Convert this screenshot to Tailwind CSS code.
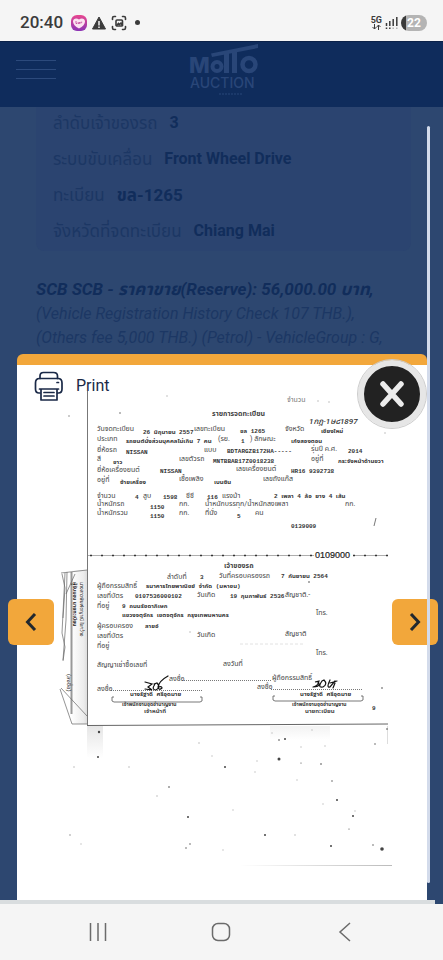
<!DOCTYPE html>
<html lang="th">
<head>
  <meta charset="UTF-8">
  <meta name="viewport" content="width=device-width, initial-scale=1.0">
  <title>Motto Auction</title>
  <script src="https://cdn.jsdelivr.net/npm/@tailwindcss/browser@4"></script>
</head>
<body class="min-h-screen flex flex-col bg-[#f5f5f5] font-[Roboto,'Noto_Sans_Thai','Noto_Sans',sans-serif]">
  <!-- Status bar -->
  <div class="h-[41px] shrink-0 flex items-center justify-between pl-5 pr-4 pt-1 text-[#3b3b3b]">
    <div class="flex items-center gap-1">
      <span class="text-[17px] font-medium mr-1">20:40</span>
      <svg class="size-4" viewBox="0 0 16 16">
        <defs><linearGradient id="app" x1="0" y1="0" x2="0" y2="1"><stop offset="0" stop-color="#e8478f"/><stop offset="1" stop-color="#8b35b5"/></linearGradient></defs>
        <rect width="16" height="16" rx="6" fill="url(#app)"/>
        <path d="M8 13.500C4 11.500 2 9 2 6.500 2 3.500 5.500 2.500 8 4.500c2.500-2 6-1 6 2 0 2.500-2 5-6 7z" fill="#fbe3f1"/>
        <path d="M5 6v2.500h1.200M7.200 7v1.500h1.300V7M9.800 8.500V7.200h1.400" fill="none" stroke="#c23c97" stroke-width=".8"/>
      </svg>
      <svg class="size-4" viewBox="0 0 16 16"><path d="M8 2l6.500 12h-13z" fill="#3b3b3b" stroke="#3b3b3b" stroke-linejoin="round"/><path d="M8 6v4.500M8 11.500v1.500" stroke="#f5f5f5" stroke-width="1.500"/></svg>
      <svg class="size-4" viewBox="0 0 16 16" fill="none" stroke="#3b3b3b" stroke-width="1.600" stroke-linecap="round">
        <path d="M1.500 4.500V3q0-1.500 1.500-1.500h1.500M11.500 1.500H13q1.500 0 1.500 1.500v1.500M14.500 11.500V13q0 1.500-1.500 1.500h-1.500M4.500 14.500H3q-1.500 0-1.500-1.500v-1.500"/>
        <rect x="5" y="5" width="6.500" height="6" rx="1"/><path d="M5.500 10.500l2-2 1 1 1.500-1.500 1.500 2.500"/>
      </svg>
      <span class="size-[5px] rounded-full bg-[#3b3b3b] ml-1"></span>
    </div>
    <div class="flex items-center gap-[3px]">
      <div class="flex flex-col items-center">
        <span class="text-[9px] leading-[8px] font-bold">5G</span>
        <svg class="w-[9px] h-[6px]" viewBox="0 0 9 6" fill="none" stroke="#3b3b3b"><path d="M2.500 0v5M.500 3l2 2 2-2M6.500 6V1M4.800 3l1.700-2 2 2"/></svg>
      </div>
      <svg class="w-[13px] h-[14px]" viewBox="0 0 13 14" stroke="#3b3b3b" stroke-width="1.500"><path d="M1.500 7v3M4.800 5v5M8.200 3v7M11.800 1v9"/><path d="M1.500 11.500V13M4.800 11.500V13" /><path d="M8.200 11.500V13M11.800 11.500V13" stroke="#b5b5b5"/></svg>
      <span class="w-[26px] h-4 rounded-full text-center text-[12px] leading-4 font-bold text-white bg-linear-to-r from-[#3b3b3b] from-20% to-[#b4b4b4] to-20%">22</span>
    </div>
  </div>

  <main class="relative flex-1 bg-[#2d4770] overflow-hidden">
    <!-- Site header, dimmed by the overlay -->
    <header class="h-[66px] bg-[#0f2c5c] border-t border-[#0b2148] flex items-start justify-between px-4">
      <button aria-label="Menu" class="w-10 mt-[18px] flex flex-col gap-2">
        <span class="h-px w-full bg-[#2c4a7c]"></span>
        <span class="h-px w-full bg-[#2c4a7c]"></span>
        <span class="h-px w-full bg-[#2c4a7c]"></span>
      </button>
      <svg class="w-[72px] h-[56px]" viewBox="0 0 72 56" fill="#294678" font-family="Inter, sans-serif" font-weight="800">
        <text x="3" y="31" font-size="22">M</text>
        <circle cx="31" cy="24.500" r="4.500" fill="none" stroke="#294678" stroke-width="4"/>
        <path d="M25 11.500L72 2v4L26 15zM38 11.500l5-1V31h-5zM46 10l5-1v22h-5z"/>
        <circle cx="63" cy="22.500" r="6.500" fill="none" stroke="#294678" stroke-width="4.500"/>
        <text x="4" y="46" font-size="14" font-weight="500">AUCTION</text>
        <path d="M33 52h24" stroke="#294678" stroke-width="1" stroke-dasharray="2 1"/>
      </svg>
      <span class="w-10"></span>
    </header>

    <!-- Vehicle details -->
    <section class="h-[247px] overflow-hidden px-9 text-[#1c3764]">
      <div class="w-[118px] h-1 mx-auto bg-[#343f58] rounded-b"></div>
      <dl class="h-[146px] -mr-1 px-[17px] bg-[#2b4470] rounded-b-lg leading-9">
        <div class="flex gap-3 -mt-1.5 h-9"><dt class="text-[17px]">ลำดับเจ้าของรถ</dt><dd class="font-bold text-[#112d5b]">3</dd></div>
        <div class="flex gap-3 h-9"><dt class="text-[17px]">ระบบขับเคลื่อน</dt><dd class="font-bold text-[#112d5b]">Front Wheel Drive</dd></div>
        <div class="flex gap-3 h-9"><dt class="text-[17px]">ทะเบียน</dt><dd class="text-[17px] font-bold text-[#112d5b]">ขล-1265</dd></div>
        <div class="flex gap-3 h-9"><dt class="text-[17px]">จังหวัดที่จดทะเบียน</dt><dd class="font-bold text-[#112d5b]">Chiang Mai</dd></div>
      </dl>
      <p class="mt-[26px] text-base leading-6 italic whitespace-nowrap">
        <b class="text-[17px] text-[#112d5b]">SCB SCB - ราคาขาย(Reserve): 56,000.00 บาท,</b><br>
        <span>(Vehicle Registration History Check 107 THB.),<br>(Others fee 5,000 THB.) (Petrol) - VehicleGroup : G,</span>
      </p>
    </section>

    <!-- Document popup -->
    <section class="relative ml-[17px] mr-4 border-t-[11px] border-[#f2a73b] rounded-t-md bg-white">
      <svg class="block w-full" viewBox="17 365 410 535" role="img" aria-label="รายการจดทะเบียน" font-family="Roboto, 'Noto Sans Thai', 'Noto Sans', sans-serif" font-size="7" fill="#444">
        <defs>
          <linearGradient id="fold" x1="0" x2="1"><stop offset="0" stop-color="#fff"/><stop offset=".8" stop-color="#ececec"/><stop offset="1" stop-color="#ddd"/></linearGradient>
          <linearGradient id="edge" gradientUnits="userSpaceOnUse" x1="240" x2="392" y1="0" y2="0"><stop offset="0" stop-color="#fff"/><stop offset="1" stop-color="#bbb"/></linearGradient>
          <linearGradient id="shade" x1="0" x2="0" y1="0" y2="1"><stop offset="0" stop-color="#e6e6e6"/><stop offset="1" stop-color="#fff"/></linearGradient>
        </defs>

        <!-- paper edges and folded flap -->
        <rect x="71" y="570" width="16" height="154" fill="url(#fold)"/>
        <rect x="87" y="726" width="16" height="32" fill="url(#shade)"/>
        <rect x="270" y="726" width="60" height="14" fill="url(#shade)" opacity=".5"/>
        <path d="M87.500 391V725" stroke="#777"/>
        <path d="M87 725.500L388 724" stroke="#666"/>
        <path d="M387.500 726v18" stroke="#ddd"/>
        <path d="M240 865.500h152" stroke="url(#edge)"/>
        <path d="M71.500 572v142" stroke="#999" stroke-width="2"/>
        <g fill="none" stroke="#666" stroke-width=".7">
          <path d="M61 573l26-3M65 573l-3 60 3 14-2 14M62 574l3 14-2 30M67 572l-1 48-3 40M60 689l12 35h15M61 688l26 28M75 574l-9 20"/>
        </g>
        <g font-size="5" fill="#222">
          <text transform="translate(80 582) rotate(90)">นางสาวพิมพ์ชญาณี ใจกว้าง</text>
          <text transform="translate(73 582) rotate(90)" font-weight="bold">ผู้รับมอบ นายทะเบียน</text>
          <text transform="translate(67 674) rotate(90)" font-size="6">(ลงชื่อ)</text>
        </g>

        <!-- printed form -->
        <g font-weight="bold"><text x="212" y="416">รายการจดทะเบียน</text><text x="224" y="568">เจ้าของรถ</text></g>
        <text x="97" y="431">วันจดทะเบียน</text><text x="194" y="431">เลขทะเบียน</text><text x="285" y="431">จังหวัด</text>
        <text x="97" y="441">ประเภท</text><text x="218" y="441">(รย.</text><text x="250" y="441">) ลักษณะ</text>
        <text x="97" y="452">ยี่ห้อรถ</text><text x="204" y="452">แบบ</text><text x="311" y="451">รุ่นปี ค.ศ.</text>
        <text x="97" y="461">สี</text><text x="179" y="461">เลขตัวรถ</text><text x="311" y="461">อยู่ที่</text>
        <text x="97" y="472">ยี่ห้อเครื่องยนต์</text><text x="236" y="471">เลขเครื่องยนต์</text>
        <text x="97" y="482">อยู่ที่</text><text x="179" y="481">เชื้อเพลิง</text><text x="263" y="481">เลขถังแก๊ส</text>
        <text x="97" y="498">จำนวน</text><text x="143" y="498">สูบ</text><text x="186" y="498">ซีซี</text><text x="222" y="498">แรงม้า</text>
        <text x="97" y="506">น้ำหนักรถ</text><text x="179" y="506">กก.</text><text x="205" y="506">น้ำหนักบรรทุก/น้ำหนักลงเพลา</text><text x="345" y="506">กก.</text>
        <text x="97" y="515">น้ำหนักรวม</text><text x="179" y="515">กก.</text><text x="205" y="515">ที่นั่ง</text><text x="255" y="515">คน</text>
        <text x="167" y="579">ลำดับที่</text><text x="219" y="578">วันที่ครอบครองรถ</text>
        <text x="97" y="588">ผู้ถือกรรมสิทธิ์</text>
        <text x="97" y="598">เลขที่บัตร</text><text x="197" y="597">วันเกิด</text><text x="285" y="597">สัญชาติ.-</text>
        <text x="97" y="608">ที่อยู่</text><text x="316" y="615">โทร.</text>
        <text x="97" y="628">ผู้ครอบครอง</text>
        <text x="97" y="638">เลขที่บัตร</text><text x="197" y="637">วันเกิด</text><text x="285" y="636">สัญชาติ</text>
        <text x="97" y="648">ที่อยู่</text><text x="316" y="655">โทร.</text>
        <text x="97" y="667">สัญญาเช่าซื้อเลขที่</text><text x="223" y="666">ลงวันที่</text>
        <text x="169" y="681">ลงชื่อ</text><text x="272" y="680">ผู้ถือกรรมสิทธิ์</text>
        <text x="97" y="691">ลงชื่อ</text><text x="257" y="689">ลงชื่อ</text>
        <text x="144" y="713" font-size="6" font-weight="bold">เจ้าหน้าที่</text><text x="305" y="713" font-size="6" font-weight="bold">นายทะเบียน</text>

        <!-- typed values -->
        <g font-family="'Liberation Mono', 'Noto Sans Thai', monospace" font-size="6" font-weight="bold" fill="#333">
          <text x="143" y="434">26 มิถุนายน 2557</text><text x="240" y="433">ขล 1265</text><text x="321" y="433">เชียงใหม่</text>
          <text x="126" y="443">รถยนต์นั่งส่วนบุคคลไม่เกิน 7 คน</text><text x="241" y="443">1</text><text x="291" y="443">เก๋งสองตอน</text>
          <text x="126" y="454">NISSAN</text><text x="227" y="453">BDTARGZB172HA-----</text><text x="348" y="453">2014</text>
          <text x="113" y="464">ขาว</text><text x="213" y="463">MNTBBAB17Z0018238</text><text x="338" y="463">กระจังหน้าด้านขวา</text>
          <text x="160" y="473">NISSAN</text><text x="291" y="473">HR16 9392738</text>
          <text x="120" y="484">ซ้ายเครื่อง</text><text x="214" y="484">เบนซิน</text>
          <text x="135" y="499">4</text><text x="163" y="499">1598</text><text x="207" y="499">116</text><text x="274" y="498">2 เพลา 4 ล้อ ยาง 4 เส้น</text>
          <text x="150" y="509">1150</text><text x="150" y="518">1150</text><text x="237" y="518">5</text>
          <text x="291" y="528">0139009</text>
          <text x="200" y="579">3</text><text x="281" y="578">7 กันยายน 2564</text>
          <text x="146" y="588">ธนาคารไทยพาณิชย์ จำกัด (มหาชน)</text>
          <text x="135" y="598">0107536000102</text><text x="230" y="598">19 กุมภาพันธ์ 2536</text>
          <text x="122" y="608">9 ถนนรัชดาภิเษก</text><text x="122" y="617">แขวงจตุจักร เขตจตุจักร กรุงเทพมหานคร</text>
          <text x="145" y="628">ลายอ์</text>
          <text x="130" y="696">นางรัฐาดี ศรีอุดมาย</text><text x="300" y="696">นางรัฐาดี ศรีอุดมาย</text>
          <g font-size="5"><text x="122" y="706">เจ้าพนักงานชุดชำนาญงาน</text><text x="292" y="706">เจ้าพนักงานชุดชำนาญงาน</text></g>
          <text x="372" y="710">9</text>
        </g>
        <text x="315" y="558" font-size="9" font-family="'Liberation Sans', sans-serif" fill="#222" stroke="#222" stroke-width=".2">0109000</text>
        <text x="309" y="424" font-size="8" font-style="italic" font-weight="500" fill="#333">1กฎ-1ษ๘1897</text>
        <text x="287" y="402" fill="#777">จำนวน</text>

        <!-- rules, brackets and signatures -->
        <g fill="none" stroke="#555" stroke-width=".8">
          <path d="M88 555.500h226M353 555.500h35" stroke="#999"/>
          <path d="M90 555.500h225M353 555.500h35" stroke="#333" stroke-width="1.600" stroke-dasharray="2 9"/>
          <path d="M182 680.500h90M111 690.500h92M271 689.500h92" stroke-dasharray="1 1"/>
          <path d="M114 697h-2v4l2 1h86l2-1v-4h-2M275 696h-2v4l2 1h86l2-1v-4h-2"/>
          <path d="M376 518l-2 8"/>
        </g>
        <g fill="none" stroke="#111" stroke-width="1.200" stroke-linecap="round">
          <path d="M145 682l7 2-4 3 4 3-7-1M155 684q-4 6 1 6 5-3 1-7l-3 1M168 676q-9 5-10 11 1 4 4 1 0-2-3-1"/>
          <path d="M313 687q6 0 6-3 0-3-4-2l4-1q-1 5-6 6M322 681q-5 7 1 6 5-3 1-7l-2 1M330 680q-4 8 0 7l5-6M330 683l7-2M335 683l-2 5"/>
        </g>

        <!-- scanner dust -->
        <g fill="#444">
          <circle cx="99" cy="732" r="1.200"/><circle cx="98" cy="757" r="1"/><circle cx="225" cy="767" r="1"/><circle cx="279" cy="759" r="1.500"/><circle cx="285" cy="739" r="1"/><circle cx="279" cy="740" r=".8"/>
          <circle cx="188" cy="817" r="1"/><circle cx="265" cy="835" r="1"/><circle cx="331" cy="846" r="1"/><circle cx="337" cy="800" r="1"/><circle cx="353" cy="816" r="1"/><circle cx="332" cy="781" r=".7"/>
          <circle cx="321" cy="764" r=".8"/><circle cx="301" cy="763" r=".6"/><circle cx="169" cy="787" r=".8"/><circle cx="382" cy="849" r="1.800"/><circle cx="373" cy="845" r=".7"/><circle cx="190" cy="844" r=".7"/><circle cx="186" cy="848" r=".7"/>
          <circle cx="387" cy="729" r=".8"/><circle cx="375" cy="744" r=".7"/><circle cx="382" cy="688" r=".8"/><circle cx="309" cy="582" r=".8"/><circle cx="120" cy="413" r=".7"/><circle cx="349" cy="829" r=".6"/>
        </g>
        <g fill="#bbb">
          <circle cx="69" cy="416" r="1"/><circle cx="167" cy="396" r=".8"/><circle cx="199" cy="743" r=".8"/><circle cx="129" cy="767" r=".8"/><circle cx="74" cy="767" r=".8"/><circle cx="157" cy="796" r=".8"/><circle cx="212" cy="756" r=".7"/>
          <circle cx="233" cy="810" r=".7"/><circle cx="70" cy="835" r=".9"/><circle cx="81" cy="844" r=".7"/><circle cx="223" cy="850" r=".7"/><circle cx="255" cy="772" r=".7"/><circle cx="257" cy="761" r=".7"/><circle cx="297" cy="780" r=".7"/>
          <circle cx="323" cy="804" r=".7"/><circle cx="295" cy="835" r=".8"/><circle cx="301" cy="747" r=".7"/><circle cx="325" cy="746" r=".7"/><circle cx="272" cy="733" r=".7"/><circle cx="312" cy="730" r=".7"/><circle cx="355" cy="811" r=".7"/>
          <circle cx="318" cy="401" r=".8"/><circle cx="329" cy="402" r=".8"/><circle cx="385" cy="433" r=".8"/><circle cx="190" cy="632" r=".8"/><path d="M240 644h65" stroke="#e2e2e2" stroke-dasharray="3 2"/>
        </g>
      </svg>

      <button class="absolute top-[5px] left-[17px] flex items-center gap-3 text-[#1a2947]">
        <svg class="size-[30px]" viewBox="0 0 30 30" fill="none" stroke="#1a2947" stroke-width="1.700" stroke-linejoin="round" stroke-linecap="round">
          <path d="M6 7.500V5q0-3.500 3.500-3.500h10Q23.500 1.500 23.500 5v2.500"/>
          <path d="M6 22H5q-3.500 0-3.500-4v-6q0-4.500 4-4.500h18.500q4 0 4 4.500v6q0 4-3.500 4h-1"/>
          <path d="M5.500 18h19M7 18v11h16V18M10 21.500h10M10 25h10M23 11.500h1.500"/>
        </svg>
        <span class="text-base leading-8">Print</span>
      </button>

      <button aria-label="Close" class="absolute -top-[5px] right-[1px] size-[68px] rounded-full bg-[#222] border-[6px] border-[#e6e6e6] outline outline-[#ccc] flex items-center justify-center">
        <svg class="size-[26px]" viewBox="0 0 26 26" stroke="#ececec" stroke-width="5.500" stroke-linecap="round"><path d="M4 3l18 20M22 3L4 23"/></svg>
      </button>

      <button aria-label="Previous" class="absolute top-[234px] -left-[9px] size-[46px] rounded-md bg-[#f2a73b] flex items-center justify-center">
        <svg class="w-3 h-[18px]" viewBox="0 0 12 18" fill="none" stroke="#22282e" stroke-width="3"><path d="M10 1L2.500 9l7.500 8"/></svg>
      </button>
      <button aria-label="Next" class="absolute top-[234px] -right-[11px] size-[46px] rounded-md bg-[#f2a73b] flex items-center justify-center">
        <svg class="w-3 h-[18px]" viewBox="0 0 12 18" fill="none" stroke="#22282e" stroke-width="3"><path d="M2 1l7.500 8L2 17"/></svg>
      </button>
    </section>

    <!-- Scrollbars -->
    <div class="absolute top-[85px] bottom-[21px] right-[13px] w-[3px] rounded-full bg-[#d3dbeb]"></div>
    <div class="h-1 mr-2 bg-[#d9dddf]"></div>
  </main>

  <!-- Android navigation -->
  <nav class="h-14 shrink-0 flex items-center justify-around px-9">
    <button aria-label="Recents"><svg class="size-5" viewBox="0 0 20 20" stroke="#6b6b6b" stroke-width="1.500"><path d="M2.500 1v18M10 1v18M17.500 1v18"/></svg></button>
    <button aria-label="Home"><svg class="size-5" viewBox="0 0 20 20" fill="none" stroke="#6b6b6b" stroke-width="1.500"><rect x="1.500" y="1.500" width="17" height="17" rx="5.500"/></svg></button>
    <button aria-label="Back"><svg class="size-5" viewBox="0 0 20 20" fill="none" stroke="#6b6b6b" stroke-width="1.500"><path d="M15 1L5 10l10 9"/></svg></button>
  </nav>
</body>
</html>
